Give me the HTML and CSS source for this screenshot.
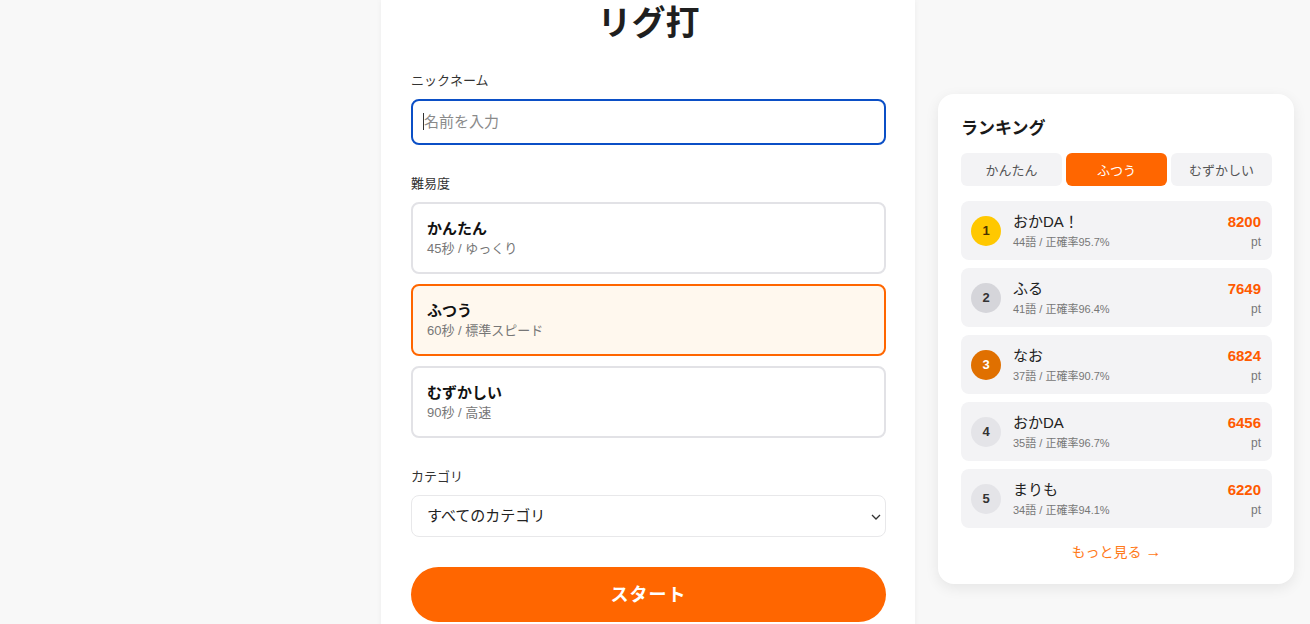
FILE: index.html
```html
<!DOCTYPE html>
<html lang="ja">
<head>
<meta charset="utf-8">
<title>リグ打</title>
<link rel="stylesheet" href="styles.css">
</head>
<body>
<div class="page">
  <main class="main-card">
    <h1 class="title">リグ打</h1>

    <div class="field">
      <div class="label">ニックネーム</div>
      <div class="text-input"><span class="caret"></span><span class="placeholder">名前を入力</span></div>
    </div>

    <div class="field">
      <div class="label">難易度</div>
      <div class="options">
        <div class="option">
          <div class="option-title">かんたん</div>
          <div class="option-sub">45秒 / ゆっくり</div>
        </div>
        <div class="option selected">
          <div class="option-title">ふつう</div>
          <div class="option-sub">60秒 / 標準スピード</div>
        </div>
        <div class="option">
          <div class="option-title">むずかしい</div>
          <div class="option-sub">90秒 / 高速</div>
        </div>
      </div>
    </div>

    <div class="field">
      <div class="label">カテゴリ</div>
      <div class="select">
        <span>すべてのカテゴリ</span>
        <svg class="chevron" width="10" height="6" viewBox="0 0 10 6"><path d="M1 1l4 4 4-4" fill="none" stroke="#333" stroke-width="1.3"/></svg>
      </div>
    </div>

    <div class="start">スタート</div>
  </main>

  <aside class="rank-card">
    <h2 class="rank-title">ランキング</h2>
    <div class="tabs">
      <div class="tab">かんたん</div>
      <div class="tab active">ふつう</div>
      <div class="tab">むずかしい</div>
    </div>
    <ol class="rank-list">
      <li class="rank-item">
        <span class="badge b1">1</span>
        <div class="info"><div class="name">おかDA！</div><div class="meta">44語 / 正確率95.7%</div></div>
        <div class="score"><div class="pts">8200</div><div class="unit">pt</div></div>
      </li>
      <li class="rank-item">
        <span class="badge b2">2</span>
        <div class="info"><div class="name">ふる</div><div class="meta">41語 / 正確率96.4%</div></div>
        <div class="score"><div class="pts">7649</div><div class="unit">pt</div></div>
      </li>
      <li class="rank-item">
        <span class="badge b3">3</span>
        <div class="info"><div class="name">なお</div><div class="meta">37語 / 正確率90.7%</div></div>
        <div class="score"><div class="pts">6824</div><div class="unit">pt</div></div>
      </li>
      <li class="rank-item">
        <span class="badge">4</span>
        <div class="info"><div class="name">おかDA</div><div class="meta">35語 / 正確率96.7%</div></div>
        <div class="score"><div class="pts">6456</div><div class="unit">pt</div></div>
      </li>
      <li class="rank-item">
        <span class="badge">5</span>
        <div class="info"><div class="name">まりも</div><div class="meta">34語 / 正確率94.1%</div></div>
        <div class="score"><div class="pts">6220</div><div class="unit">pt</div></div>
      </li>
    </ol>
    <div class="more">もっと見る <span class="arrow">→</span></div>
  </aside>
</div>
</body>
</html>
```

FILE: styles.css
```css
* { box-sizing: border-box; }
html, body { margin: 0; padding: 0; }
body {
  background: #f8f8f8;
  font-family: "Liberation Sans", "Noto Sans CJK JP", sans-serif;
  color: #222;
  height: 624px;
  overflow: hidden;
}
.page {
  display: flex;
  align-items: flex-start;
  gap: 23px;
  padding-left: 381px;
}
.main-card {
  width: 534px;
  height: 640px;
  background: #fff;
  padding: 0 29px 0 30px;
  box-shadow: 0 0 6px rgba(0,0,0,0.05);
  display: flex;
  flex-direction: column;
}
.title {
  margin: 0;
  font-size: 34px;
  line-height: 46px;
  font-weight: 700;
  text-align: center;
  color: #1f1f1f;
}
.field { margin-top: 25px; }
.field + .field { margin-top: 29px; }
.label {
  font-size: 13px;
  line-height: 20px;
  color: #333;
  margin-bottom: 8px;
}
.text-input {
  height: 46px;
  border: 2px solid #0b4fc6;
  border-radius: 8px;
  display: flex;
  align-items: center;
  padding: 0 0 3px 10px;
}
.caret {
  width: 1px;
  height: 17px;
  margin-top: 2px;
  background: #333;
}
.placeholder {
  font-size: 15px;
  color: #8a8a8a;
}
.options {
  display: flex;
  flex-direction: column;
  gap: 10px;
}
.option {
  height: 72px;
  border: 2px solid #e2e2e6;
  border-radius: 8px;
  padding: 14px 14px;
}
.option.selected {
  border-color: #ff6600;
  background: #fff8ee;
}
.option-title {
  font-size: 15px;
  line-height: 21px;
  font-weight: 700;
  color: #111;
}
.option-sub {
  font-size: 13px;
  line-height: 20px;
  color: #777;
}
.select {
  height: 42px;
  border: 1px solid #e8e8ea;
  border-radius: 8px;
  display: flex;
  align-items: center;
  justify-content: space-between;
  padding: 0 4px 3px 15px;
  font-size: 15px;
  color: #222;
}
.chevron { margin-top: 5px; }
.start {
  margin-top: 30px;
  height: 55px;
  border-radius: 28px;
  background: #ff6600;
  color: #fff;
  font-size: 18px;
  font-weight: 700;
  display: flex;
  align-items: center;
  justify-content: center;
  letter-spacing: 1px;
  padding-bottom: 3px;
}
.rank-card {
  margin-top: 94px;
  width: 356px;
  background: #fff;
  border-radius: 16px;
  box-shadow: 0 4px 14px rgba(0,0,0,0.08);
  padding: 22px 22px 22px 23px;
}
.rank-title {
  margin: 0;
  padding-top: 2px;
  font-size: 17px;
  line-height: 22px;
  font-weight: 700;
  color: #1a1a1a;
}
.tabs {
  margin-top: 13px;
  display: grid;
  grid-template-columns: repeat(3, 1fr);
  gap: 4px;
}
.tab {
  height: 33px;
  border-radius: 6px;
  background: #f3f3f5;
  color: #555;
  font-size: 13px;
  display: flex;
  align-items: center;
  justify-content: center;
}
.tab.active {
  background: #ff6600;
  color: #fff;
}
.rank-list {
  list-style: none;
  margin: 15px 0 0;
  padding: 0;
  display: flex;
  flex-direction: column;
  gap: 8px;
}
.rank-item {
  height: 59px;
  background: #f3f3f5;
  border-radius: 8px;
  display: flex;
  align-items: center;
  padding: 0 11px 0 10px;
  gap: 12px;
}
.badge {
  width: 30px;
  height: 30px;
  border-radius: 50%;
  background: #e4e4e8;
  color: #333;
  font-size: 13px;
  font-weight: 700;
  display: flex;
  align-items: center;
  justify-content: center;
  flex: none;
}
.badge.b1 { background: #ffc800; color: #4a3300; }
.badge.b2 { background: #d5d5da; }
.badge.b3 { background: #e07000; color: #fff; }
.info { flex: 1; }
.name {
  font-size: 15px;
  line-height: 20px;
  color: #222;
}
.meta {
  margin-top: 2px;
  font-size: 11px;
  line-height: 16px;
  color: #777;
}
.score { text-align: right; }
.pts {
  font-size: 15px;
  line-height: 20px;
  font-weight: 700;
  color: #ff5a00;
}
.unit {
  margin-top: 2px;
  font-size: 12px;
  line-height: 16px;
  color: #777;
}
.more {
  margin-top: 14px;
  text-align: center;
  font-size: 14px;
  line-height: 20px;
  color: #ff7a1a;
}
.arrow { font-size: 16px; font-weight: 700; }
```
